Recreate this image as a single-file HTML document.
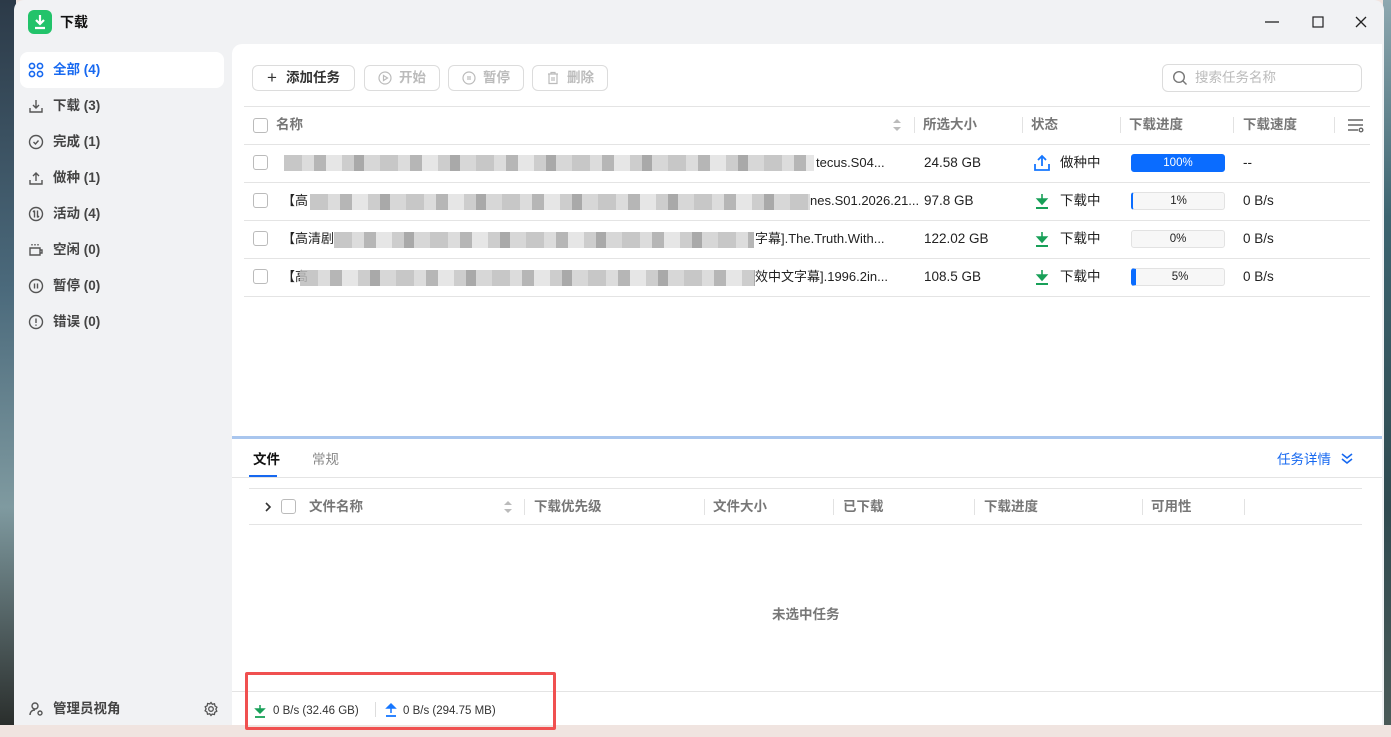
<!DOCTYPE html>
<html><head><meta charset="utf-8"><style>
*{margin:0;padding:0;box-sizing:border-box}
body{width:1391px;height:737px;overflow:hidden;position:relative;font-family:"Liberation Sans","Noto Sans CJK SC",sans-serif;font-size:13px;line-height:16px;color:#222;background:#f0e4e0}
.a{position:absolute}
.deskL{left:0;top:0;width:16px;height:725px;background:linear-gradient(#2c3a48,#4b6a7c 40%,#7f9aa0 70%,#2a2e2c)}
.deskR{left:1383px;top:0;width:8px;height:725px;background:linear-gradient(#8ea8b0,#3c6470 30%,#2f4a50 70%,#4a5a58)}
.win{left:14px;top:0;width:1370px;height:725px;background:#f1f2f4;border-radius:10px 10px 0 0}
.panel{left:232px;top:44px;width:1150px;height:681px;background:#fff;border-radius:10px 0 0 0}
.nav{left:20px;width:204px;height:36px;font-size:13.5px;font-weight:bold;color:#444;display:flex;align-items:center;padding-left:8px}
.nav svg{margin-right:9px}
.btn{top:65px;height:26px;border:1px solid #dcdcdc;border-radius:6px;display:flex;align-items:center;justify-content:center;font-size:13.5px;color:#bbb;font-weight:bold}
.hline{height:1px;background:#e4e4e4}
.cb{width:15px;height:15px;border:1px solid #bbb;border-radius:3px;background:#fff}
.th{font-size:13.5px;font-weight:bold;color:#777}
.vs{width:1px;height:16px;background:#e2e2e2}
.td{font-size:13.5px;color:#222}
.nm{font-size:13px;color:#222}
.bar{width:94px;height:18px;border:1px solid #e2e2e2;border-radius:3px;background:#f7f7f7;font-size:11.5px;text-align:center;line-height:16px;overflow:hidden}
.blur{height:16px;background:repeating-linear-gradient(90deg,#bdbdbd 0 18px,#d6d6d6 18px 30px,#a9a9a9 30px 42px,#e2e2e2 42px 58px,#c4c4c4 58px 70px,#9a9a9a 70px 80px,#d0d0d0 80px 96px);opacity:.85}
</style></head><body>
<div class="a deskL"></div><div class="a deskR"></div>
<div class="a win"></div>
<div class="a" style="left:28px;top:10px;width:24px;height:24px;border-radius:6px;background:#22c36a"></div>
<svg class="a" style="left:28px;top:10px" width="24" height="24"><path d="M12 5v9M8 10l4 4 4-4M7 18h10" stroke="#fff" stroke-width="2.2" fill="none"/></svg>
<div class="a" style="left:60px;top:14px;font-size:14px;font-weight:bold;color:#111">下载</div>
<svg class="a" style="left:1262px;top:14px" width="110" height="16"><path d="M3 8h14" stroke="#222" stroke-width="1.3"/><rect x="51" y="3" width="10" height="10" fill="none" stroke="#222" stroke-width="1.2"/><path d="M94 3l10 10M104 3l-10 10" stroke="#222" stroke-width="1.3"/></svg>
<div class="a" style="left:20px;top:52px;width:204px;height:36px;background:#fff;border-radius:8px"></div>
<div class="a nav" style="top:52px;color:#1668f0"><svg width="16" height="16"><g fill="none" stroke="#1668f0" stroke-width="1.6"><circle cx="4" cy="4" r="2.6"/><circle cx="12" cy="4" r="2.6"/><circle cx="4" cy="12" r="2.6"/><circle cx="12" cy="12" r="2.6"/></g></svg>全部 (4)</div>
<div class="a nav" style="top:88px"><svg width="16" height="16" fill="none" stroke="#555" stroke-width="1.4"><path d="M8 2v8M5 7l3 3 3-3M2 10v4h12v-4"/></svg>下载 (3)</div>
<div class="a nav" style="top:124px"><svg width="16" height="16" fill="none" stroke="#555" stroke-width="1.4"><circle cx="8" cy="8" r="6.5"/><path d="M5.5 8l2 2 3-3.5"/></svg>完成 (1)</div>
<div class="a nav" style="top:160px"><svg width="16" height="16" fill="none" stroke="#555" stroke-width="1.4"><path d="M8 11V3M5 6l3-3 3 3M2 10v4h12v-4"/></svg>做种 (1)</div>
<div class="a nav" style="top:196px"><svg width="16" height="16" fill="none" stroke="#555" stroke-width="1.4"><circle cx="8" cy="8" r="6.5"/><path d="M6.5 4.5v7M9.5 4.5v7M5 6l1.5-1.5M11 10l-1.5 1.5"/></svg>活动 (4)</div>
<div class="a nav" style="top:232px"><svg width="16" height="16" fill="none" stroke="#555" stroke-width="1.4"><path d="M2 6h10v7H2zM12 8h2v3h-2M4 2v1.5M7 2v1.5M10 2v1.5"/></svg>空闲 (0)</div>
<div class="a nav" style="top:268px"><svg width="16" height="16" fill="none" stroke="#555" stroke-width="1.4"><circle cx="8" cy="8" r="6.5"/><path d="M6.5 5.5v5M9.5 5.5v5"/></svg>暂停 (0)</div>
<div class="a nav" style="top:304px"><svg width="16" height="16" fill="none" stroke="#555" stroke-width="1.4"><circle cx="8" cy="8" r="6.5"/><path d="M8 4.5v4.5M8 10.5v1.2"/></svg>错误 (0)</div>
<div class="a nav" style="top:691px"><svg width="16" height="16" fill="none" stroke="#555" stroke-width="1.4"><circle cx="7" cy="5" r="3"/><path d="M2 14c0-3 2-5 5-5"/><circle cx="12" cy="12" r="2"/></svg>管理员视角</div>
<svg class="a" style="left:203px;top:701px" width="16" height="16" fill="none" stroke="#555" stroke-width="1.3"><circle cx="8" cy="8" r="2.3"/><path d="M8 1.5l1.3 1.8 2.2-.5.5 2.2 1.9 1.2-1 2 .9 2-2 1.1-.4 2.2-2.2-.4L8 14.5l-1.3-1.8-2.2.5-.5-2.2-1.9-1.2 1-2-.9-2 2-1.1.4-2.2 2.2.4z"/></svg>
<div class="a panel"></div>
<div class="a btn" style="left:252px;width:103px;color:#333"><span style="font-size:17px;font-weight:normal;margin-right:9px">+</span>添加任务</div>
<div class="a btn" style="left:364px;width:76px"><svg width="14" height="14" style="margin-right:7px" fill="none" stroke="#bbb" stroke-width="1.2"><circle cx="7" cy="7" r="6"/><path d="M5.5 4.5l4 2.5-4 2.5z"/></svg>开始</div>
<div class="a btn" style="left:448px;width:76px"><svg width="14" height="14" style="margin-right:7px" fill="none" stroke="#bbb" stroke-width="1.2"><circle cx="7" cy="7" r="6"/><path d="M6 5v4M8 5v4"/></svg>暂停</div>
<div class="a btn" style="left:532px;width:76px"><svg width="14" height="14" style="margin-right:7px" fill="none" stroke="#bbb" stroke-width="1.2"><path d="M2 3h10M5 3V1.5h4V3M3 3v9.5h8V3M6 6v4M8 6v4"/></svg>删除</div>
<div class="a" style="left:1162px;top:64px;width:200px;height:28px;border:1px solid #dcdcdc;border-radius:6px;font-size:13.5px;color:#bbb;padding:5px 0 0 32px">搜索任务名称</div>
<svg class="a" style="left:1172px;top:70px" width="16" height="16" fill="none" stroke="#777" stroke-width="1.4"><circle cx="7" cy="7" r="5.3"/><path d="M11 11l3.5 3.5"/></svg>
<div class="a hline" style="left:244px;top:106px;width:1126px"></div>
<div class="a cb" style="left:253px;top:118px"></div>
<div class="a th" style="left:276px;top:117px">名称</div>
<svg class="a" style="left:892px;top:117px" width="10" height="16"><path d="M1 6l4-4 4 4zM1 10l4 4 4-4z" fill="#bbb"/></svg>
<div class="a vs" style="left:914px;top:117px"></div><div class="a th" style="left:923px;top:117px">所选大小</div>
<div class="a vs" style="left:1022px;top:117px"></div><div class="a th" style="left:1031px;top:117px">状态</div>
<div class="a vs" style="left:1120px;top:117px"></div><div class="a th" style="left:1129px;top:117px">下载进度</div>
<div class="a vs" style="left:1233px;top:117px"></div><div class="a th" style="left:1243px;top:117px">下载速度</div>
<div class="a vs" style="left:1334px;top:117px"></div>
<svg class="a" style="left:1347px;top:117px" width="18" height="16" fill="none" stroke="#666" stroke-width="1.4"><path d="M1 3h15M1 8h15M1 13h10"/><circle cx="14" cy="13" r="1.8"/></svg>
<div class="a hline" style="left:244px;top:144px;width:1126px"></div>
<div class="a hline" style="left:244px;top:182px;width:1126px"></div>
<div class="a hline" style="left:244px;top:220px;width:1126px"></div>
<div class="a hline" style="left:244px;top:258px;width:1126px"></div>
<div class="a hline" style="left:244px;top:296px;width:1126px"></div>
<div class="a cb" style="left:253px;top:155px"></div>
<div class="a blur" style="left:284px;top:155px;width:530px"></div>
<div class="a nm" style="left:816px;top:155px">tecus.S04...</div>
<div class="a cb" style="left:253px;top:193px"></div>
<div class="a nm" style="left:282px;top:193px">【高</div>
<div class="a blur" style="left:310px;top:194px;width:500px"></div>
<div class="a nm" style="left:810px;top:193px">nes.S01.2026.21...</div>
<div class="a cb" style="left:253px;top:231px"></div>
<div class="a nm" style="left:282px;top:231px">【高清剧</div>
<div class="a blur" style="left:334px;top:232px;width:420px"></div>
<div class="a nm" style="left:755px;top:231px">字幕].The.Truth.With...</div>
<div class="a cb" style="left:253px;top:269px"></div>
<div class="a nm" style="left:282px;top:269px">【高</div>
<div class="a blur" style="left:300px;top:270px;width:455px"></div>
<div class="a nm" style="left:755px;top:269px">效中文字幕].1996.2in...</div>
<div class="a td" style="left:924px;top:155px">24.58 GB</div>
<div class="a td" style="left:924px;top:193px">97.8 GB</div>
<div class="a td" style="left:924px;top:231px">122.02 GB</div>
<div class="a td" style="left:924px;top:269px">108.5 GB</div>
<svg class="a" style="left:1033px;top:154px" width="18" height="18" fill="none" stroke="#1677ff" stroke-width="1.8"><path d="M9 12V2M5 6l4-4 4 4M2 10v6h14v-6"/></svg>
<div class="a td" style="left:1060px;top:155px">做种中</div>
<svg class="a" style="left:1033px;top:192px" width="18" height="18"><path d="M9 2v9M4.5 7l4.5 5 4.5-5z" fill="#18a058" stroke="#18a058" stroke-width="1.6"/><path d="M3 16h12" stroke="#18a058" stroke-width="2"/></svg>
<div class="a td" style="left:1060px;top:193px">下载中</div>
<svg class="a" style="left:1033px;top:230px" width="18" height="18"><path d="M9 2v9M4.5 7l4.5 5 4.5-5z" fill="#18a058" stroke="#18a058" stroke-width="1.6"/><path d="M3 16h12" stroke="#18a058" stroke-width="2"/></svg>
<div class="a td" style="left:1060px;top:231px">下载中</div>
<svg class="a" style="left:1033px;top:268px" width="18" height="18"><path d="M9 2v9M4.5 7l4.5 5 4.5-5z" fill="#18a058" stroke="#18a058" stroke-width="1.6"/><path d="M3 16h12" stroke="#18a058" stroke-width="2"/></svg>
<div class="a td" style="left:1060px;top:269px">下载中</div>
<div class="a bar" style="left:1131px;top:154px;background:#0a6cff;border-color:#0a6cff;color:#fff">100%</div>
<div class="a bar" style="left:1131px;top:192px;border-left:2px solid #0a6cff">1%</div>
<div class="a bar" style="left:1131px;top:230px">0%</div>
<div class="a bar" style="left:1131px;top:268px;border-left:5px solid #0a6cff">5%</div>
<div class="a td" style="left:1243px;top:155px">--</div>
<div class="a td" style="left:1243px;top:193px">0 B/s</div>
<div class="a td" style="left:1243px;top:231px">0 B/s</div>
<div class="a td" style="left:1243px;top:269px">0 B/s</div>
<div class="a" style="left:232px;top:436px;width:1150px;height:3px;background:#a9c6ee"></div>
<div class="a" style="left:253px;top:452px;font-size:13.5px;font-weight:bold;color:#111">文件</div>
<div class="a" style="left:312px;top:452px;font-size:13.5px;color:#888">常规</div>
<div class="a" style="left:249px;top:475px;width:28px;height:2px;background:#1668f0"></div>
<div class="a hline" style="left:232px;top:477px;width:1150px"></div>
<div class="a" style="left:1277px;top:452px;font-size:13.5px;color:#1668f0">任务详情</div>
<svg class="a" style="left:1340px;top:452px" width="14" height="14" fill="none" stroke="#1668f0" stroke-width="1.6"><path d="M2 2l5 4 5-4M2 7l5 4 5-4"/></svg>
<div class="a hline" style="left:249px;top:488px;width:1113px"></div>
<svg class="a" style="left:263px;top:500px" width="10" height="14" fill="none" stroke="#333" stroke-width="1.6"><path d="M3 3l4 4-4 4"/></svg>
<div class="a cb" style="left:281px;top:499px"></div>
<div class="a th" style="left:309px;top:499px">文件名称</div>
<svg class="a" style="left:503px;top:499px" width="10" height="16"><path d="M1 6l4-4 4 4zM1 10l4 4 4-4z" fill="#bbb"/></svg>
<div class="a vs" style="left:524px;top:499px"></div><div class="a th" style="left:534px;top:499px">下载优先级</div>
<div class="a vs" style="left:704px;top:499px"></div><div class="a th" style="left:713px;top:499px">文件大小</div>
<div class="a vs" style="left:833px;top:499px"></div><div class="a th" style="left:843px;top:499px">已下载</div>
<div class="a vs" style="left:974px;top:499px"></div><div class="a th" style="left:984px;top:499px">下载进度</div>
<div class="a vs" style="left:1142px;top:499px"></div><div class="a th" style="left:1151px;top:499px">可用性</div>
<div class="a vs" style="left:1244px;top:499px"></div>
<div class="a hline" style="left:249px;top:524px;width:1113px"></div>
<div class="a" style="left:772px;top:607px;font-size:13.5px;font-weight:bold;color:#777">未选中任务</div>
<div class="a hline" style="left:232px;top:691px;width:1150px"></div>
<svg class="a" style="left:253px;top:703px" width="14" height="16"><path d="M7 2v7M3 6l4 4 4-4z" fill="#18a058" stroke="#18a058" stroke-width="1.5"/><path d="M2 14h10" stroke="#18a058" stroke-width="1.8"/></svg>
<div class="a" style="left:273px;top:703px;font-size:11.5px;color:#333">0 B/s (32.46 GB)</div>
<div class="a" style="left:375px;top:702px;width:1px;height:15px;background:#ddd"></div>
<svg class="a" style="left:384px;top:702px" width="14" height="16"><path d="M7 11V4M3 6l4-4 4 4z" fill="#1677ff" stroke="#1677ff" stroke-width="1.5"/><path d="M2 14h10" stroke="#1677ff" stroke-width="1.8"/></svg>
<div class="a" style="left:403px;top:703px;font-size:11.5px;color:#333">0 B/s (294.75 MB)</div>
<div class="a" style="left:245px;top:672px;width:311px;height:58px;border:3px solid #f05050;border-radius:2px"></div>
</body></html>
